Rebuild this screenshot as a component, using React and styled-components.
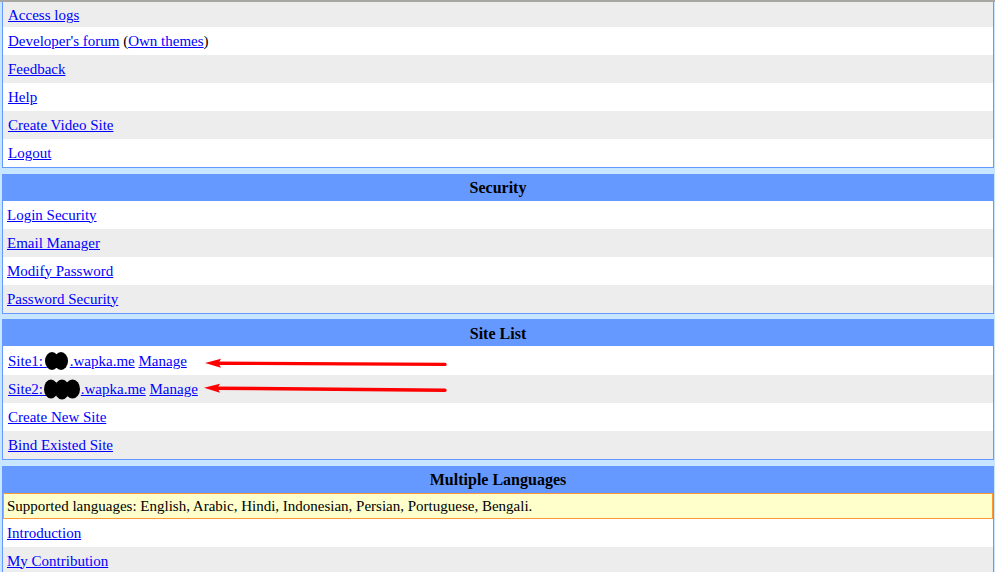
import React from "react";
import styled, { createGlobalStyle } from "styled-components";

const GlobalStyle = createGlobalStyle`
  html, body { margin: 0; padding: 0; }
  body {
    background: #c8e6ff;
    font-family: "Liberation Serif", "Times New Roman", serif;
    font-size: 15px;
    color: #000;
  }
`;

const Page = styled.div`
  position: relative;
  width: 995px;
  height: 572px;
  overflow: hidden;
  box-sizing: border-box;
  padding: 0 1px 0 2px;
  display: flex;
  flex-direction: column;
  gap: 5.5px;
`;

const TopBar = styled.div`
  height: 2px;
  margin: 0 -1px -5.5px -2px;
  background: #a8a6a2;
  flex: none;
`;

const Panel = styled.section`
  flex: none;
  border: 1px solid #6699ff;
  border-top-width: ${(p) => (p.$open ? 0 : 1)}px;
  background: #fff;
  display: flex;
  flex-direction: column;
`;

const Header = styled.div`
  height: 26px;
  background: #6699ff;
  display: flex;
  align-items: center;
  justify-content: center;
  font-weight: bold;
  font-size: 16px;
  padding-top: 1px;
  box-sizing: border-box;
`;

const Row = styled.div`
  height: ${(p) => p.$h || 28}px;
  box-sizing: border-box;
  padding-left: ${(p) => p.$pad || 4}px;
  padding-top: ${(p) => (p.$h ? p.$h - 27 : 1)}px;
  line-height: 27px;
  background: ${(p) => (p.$alt ? "#ededed" : "#ffffff")};
  white-space: nowrap;
`;

const Link = styled.a`
  color: #0000ff;
  text-decoration: underline;
  cursor: pointer;
`;

const Notice = styled.div`
  height: 26px;
  box-sizing: border-box;
  border: 1px solid #ff9933;
  background: #ffffcc;
  padding-left: 3px;
  line-height: 24px;
  white-space: nowrap;
`;

const Redacted = styled.span`
  display: inline-block;
  width: ${(p) => p.$w}px;
  height: ${(p) => p.$hh}px;
  margin-left: ${(p) => p.$ml}px;
  vertical-align: ${(p) => p.$va}px;
  line-height: 0;
  svg { display: block; }
`;

const Overlay = styled.svg`
  position: absolute;
  top: 0;
  left: 0;
  pointer-events: none;
`;

function Blob({ circles, w, h, ml, va }) {
  return (
    <Redacted $w={w} $hh={h} $ml={ml} $va={va}>
      <svg width={w} height={h} viewBox={`0 0 ${w} ${h}`}>
        {circles.map((c, i) => (
          <ellipse key={i} cx={c[0]} cy={c[1]} rx={c[2]} ry={c[3]} fill="#000" />
        ))}
      </svg>
    </Redacted>
  );
}

function Arrows() {
  return (
    <Overlay width="995" height="572" viewBox="0 0 995 572">
      <line x1="216" y1="363.2" x2="445" y2="364.4" stroke="#ff0000" strokeWidth="3.4" strokeLinecap="round" />
      <polygon points="205,363 221,358.8 218.5,363.3 221,367.8" fill="#ff0000" />
      <line x1="215" y1="388.2" x2="445" y2="390.2" stroke="#ff0000" strokeWidth="3.4" strokeLinecap="round" />
      <polygon points="204,387.8 220,383.8 217.5,388.2 220,392.8" fill="#ff0000" />
    </Overlay>
  );
}

export default function App() {
  return (
    <>
      <GlobalStyle />
      <Page>
        <TopBar />
        <Panel $open>
          <Row $alt $h={25} $pad={5}>
            <Link>Access logs</Link>
          </Row>
          <Row $pad={5}>
            <Link>Developer's forum</Link> (<Link>Own themes</Link>)
          </Row>
          <Row $alt $pad={5}>
            <Link>Feedback</Link>
          </Row>
          <Row $pad={5}>
            <Link>Help</Link>
          </Row>
          <Row $alt $pad={5}>
            <Link>Create Video Site</Link>
          </Row>
          <Row $pad={5}>
            <Link>Logout</Link>
          </Row>
        </Panel>

        <Panel>
          <Header>Security</Header>
          <Row>
            <Link>Login Security</Link>
          </Row>
          <Row $alt>
            <Link>Email Manager</Link>
          </Row>
          <Row>
            <Link>Modify Password</Link>
          </Row>
          <Row $alt>
            <Link>Password Security</Link>
          </Row>
        </Panel>

        <Panel>
          <Header>Site List</Header>
          <Row $h={29} $pad={5}>
            <Link>
              {"Site1: "}
              <Blob w={25} h={20} ml={-2} va={-5} circles={[[7, 10, 7, 9], [16, 10, 7, 9]]} />
              {".wapka.me"}
            </Link>{" "}
            <Link>Manage</Link>
          </Row>
          <Row $alt $pad={5}>
            <Link>
              {"Site2: "}
              <Blob w={37} h={22} ml={-3} va={-6} circles={[[7, 11, 7, 9.5], [18, 11.5, 7.5, 10], [28.5, 11, 7.5, 9.5]]} />
              {".wapka.me"}
            </Link>{" "}
            <Link>Manage</Link>
          </Row>
          <Row $pad={5}>
            <Link>Create New Site</Link>
          </Row>
          <Row $alt $pad={5}>
            <Link>Bind Existed Site</Link>
          </Row>
        </Panel>

        <Panel>
          <Header>Multiple Languages</Header>
          <Notice>
            Supported languages: English, Arabic, Hindi, Indonesian, Persian, Portuguese, Bengali.
          </Notice>
          <Row>
            <Link>Introduction</Link>
          </Row>
          <Row $alt>
            <Link>My Contribution</Link>
          </Row>
        </Panel>

        <Arrows />
      </Page>
    </>
  );
}
